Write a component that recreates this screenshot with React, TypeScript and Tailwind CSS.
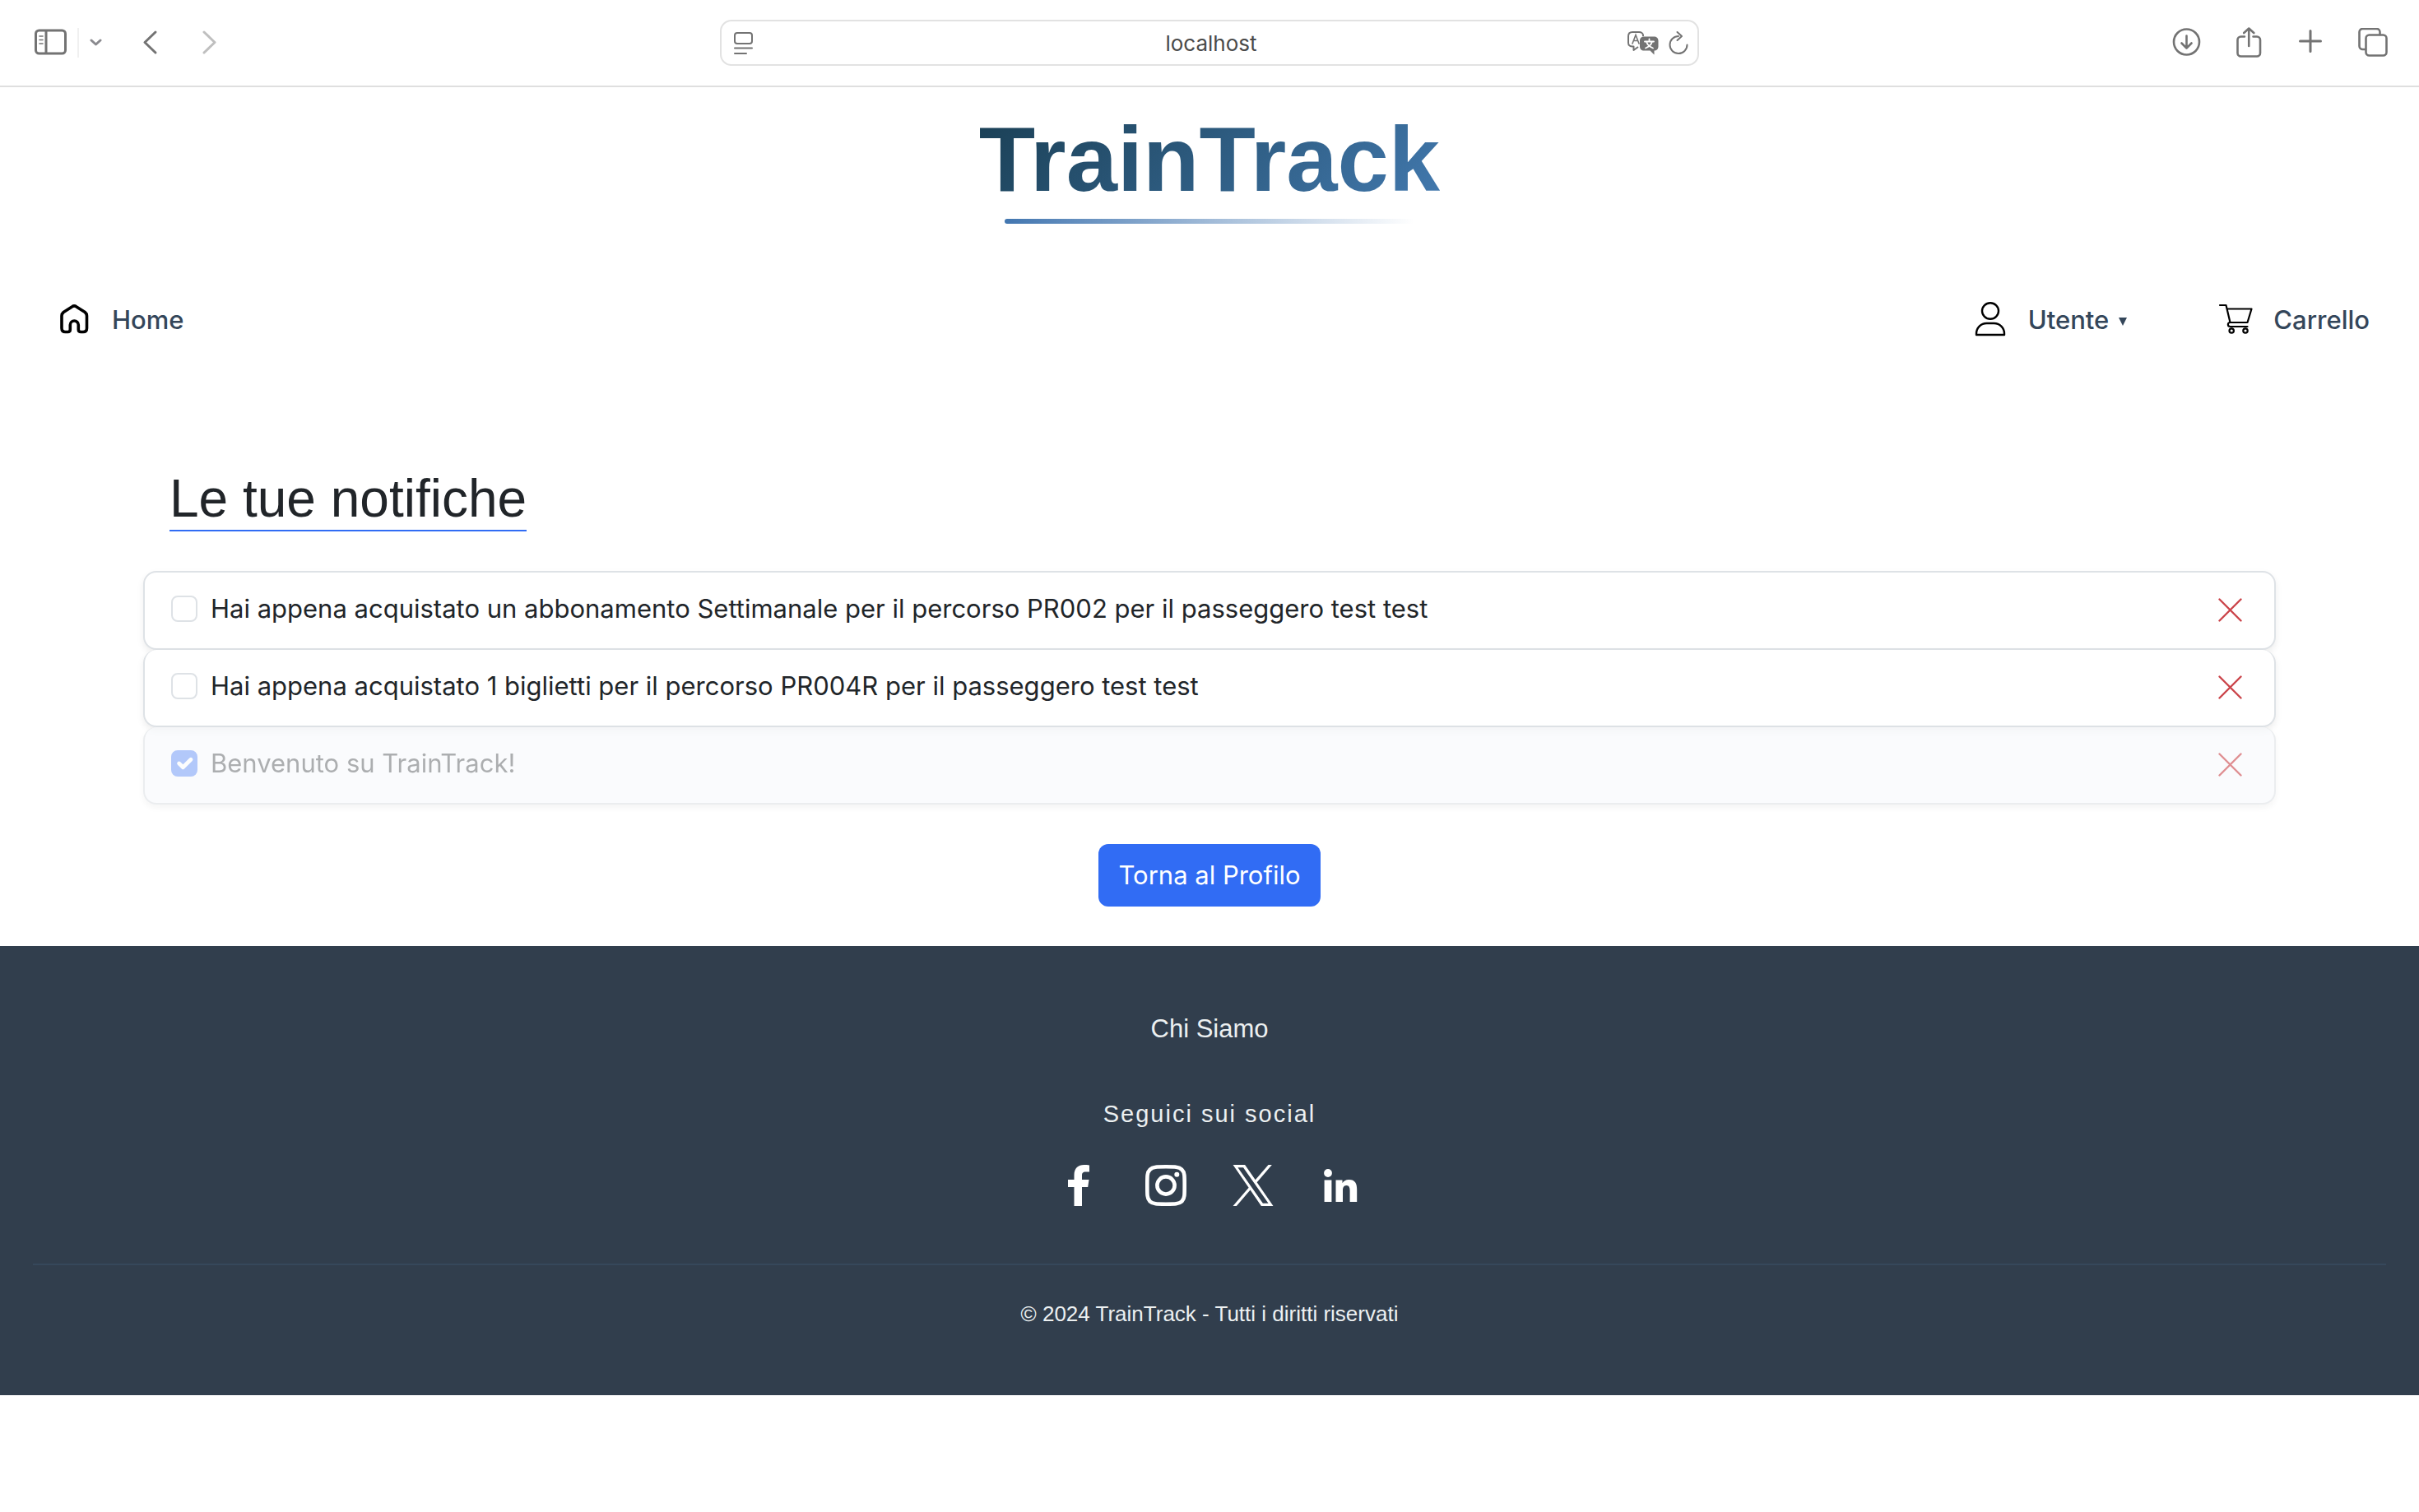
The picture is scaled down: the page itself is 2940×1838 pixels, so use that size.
import { useState } from "react";
import type { ReactNode } from "react";

function Icon({ size, className, children, width = 3 }: { size: number; className: string; children: ReactNode; width?: number }) {
  return (
    <svg
      viewBox={`0 0 ${size} ${size}`}
      className={className}
      fill="none"
      stroke="currentColor"
      strokeWidth={width}
      strokeLinecap="round"
      strokeLinejoin="round"
      aria-hidden="true"
    >
      {children}
    </svg>
  );
}

function BrowserBar() {
  const [address, setAddress] = useState("localhost");
  return (
    <div className="grid h-[106px] grid-cols-[1fr_1190px_1fr] items-center border-b-2 border-[#dfdfdf] bg-white text-[#737373]">
      <div className="flex items-center pl-[41px]">
        <button type="button" aria-label="Barra laterale">
          <Icon size={40} className="size-10">
            <rect x="2.5" y="5" width="36" height="28" rx="4" />
            <path d="M15 5.500v27" />
            <path d="M7 12h4M7 16.500h4M7 21h4" strokeWidth="1.6" />
          </Icon>
        </button>
        <span className="ml-[13px] h-9 w-0.5 bg-[#f0f0f0]" />
        <button type="button" aria-label="Gruppi di pannelli" className="ml-3 text-[#8a8a8f]">
          <Icon size={16} className="size-4">
            <path d="M3 5l5.500 5 5.500-5" />
          </Icon>
        </button>
        <button type="button" aria-label="Indietro" className="ml-[43px]">
          <Icon size={32} className="size-8">
            <path d="M22 3 9 15.500l13 12.500" />
          </Icon>
        </button>
        <button type="button" aria-label="Avanti" className="ml-[40px] text-[#bfbfbf]">
          <Icon size={32} className="size-8">
            <path d="m9 3 13 12.500L9 28" />
          </Icon>
        </button>
      </div>

      <div className="flex h-14 items-center gap-3 rounded-[14px] border-2 border-[#e2e2e2] pr-2 pl-3">
        <Icon size={28} className="size-7" width={2}>
          <rect x="4" y="2" width="21" height="13" rx="3" />
          <path d="M4 20.500h21M4 27h14" />
        </Icon>
        <input
          type="text"
          aria-label="Indirizzo"
          value={address}
          onChange={(e) => setAddress(e.target.value)}
          className="ml-[50px] min-w-0 flex-1 pt-0.5 text-center text-[26px] leading-8 text-[#4a4a4a] outline-none"
        />
        <button type="button" aria-label="Traduci">
          <svg viewBox="0 0 40 30" className="h-[30px] w-10" fill="none" aria-hidden="true">
            <path
              d="M14 20l-5.500 4v-4.500C4 20 2 18 2 15V7c0-3 2-5 5-5h8c3 0 5 2 5 4v1"
              stroke="currentColor"
              strokeWidth="2"
              strokeLinejoin="round"
            />
            <path d="m7 16 4-10.500 4 10.500M8.500 12.500h5" stroke="currentColor" strokeWidth="1.6" strokeLinecap="round" />
            <path d="M21 7.500h12c3.500 0 5.500 2 5.500 5v7c0 3-2 5-5 5v5l-5-5H21c-3 0-5-2-5-5v-7c0-3 2-5 5-5z" fill="currentColor" />
            <path d="M27.500 10.500v3M22 13.500h11M24 13.500c1 3.500 4 6.500 8 8M31 13.500c-1 3.500-4 6.500-8 8" stroke="#fff" strokeWidth="1.8" strokeLinecap="round" />
          </svg>
        </button>
        <button type="button" aria-label="Ricarica">
          <Icon size={30} className="-ml-1 size-[30px]" width={2}>
            <path d="M15 7a10.500 10.500 0 1 0 10.500 10.500" />
            <path d="m13.500 2 5.500 5-5.500 5" />
          </Icon>
        </button>
      </div>

      <div className="flex items-center justify-end gap-[39px] pr-[38px]">
        <button type="button" aria-label="Download">
          <Icon size={36} className="size-9" width={2.6}>
            <circle cx="18.500" cy="17" r="15.500" />
            <path d="M18.500 9.500v15M12.500 18.500l6 6 6-6" />
          </Icon>
        </button>
        <button type="button" aria-label="Condividi">
          <Icon size={38} className="size-[38px]" width={2.6}>
            <path d="M14 11.500H9.500a4 4 0 0 0-4 4v16a4 4 0 0 0 4 4H29a4 4 0 0 0 4-4v-16a4 4 0 0 0-4-4h-4.500" />
            <path d="M19.250 23V1.500M13.250 7l6-5.500 6 5.500" />
          </Icon>
        </button>
        <button type="button" aria-label="Nuovo pannello">
          <Icon size={36} className="size-9">
            <path d="M17 3.500v25M4.500 16h25" />
          </Icon>
        </button>
        <button type="button" aria-label="Mostra pannelli">
          <Icon size={36} className="size-9" width={2.6}>
            <rect x="9.500" y="8.500" width="25" height="25" rx="4" />
            <path d="M26.500 8V5a4 4 0 0 0-4-4h-17a4 4 0 0 0-4 4v17a4 4 0 0 0 4 4H9" />
          </Icon>
        </button>
      </div>
    </div>
  );
}

function SiteHeader() {
  return (
    <header>
      <div className="flex flex-col items-center pt-6">
        <div className="flex flex-col items-center">
          <a
            href="#"
            className="bg-linear-135 from-[#1a3f54] to-[#437ab0] bg-clip-text font-['Liberation_Sans',sans-serif] text-[112px] leading-[128px] font-bold text-transparent"
          >
            TrainTrack
          </a>
          <span className="mt-2 h-1.5 w-[89%] rounded-full bg-linear-to-r from-[#4276b0] to-transparent" />
        </div>
      </div>
      <nav className="mt-[93px] flex items-center justify-between pr-[60px] pl-[66px] text-[31px] leading-[48px] font-medium text-[#34465a]">
        <a href="#" className="flex items-center gap-[22px]">
          <Icon size={48} className="size-12 text-black" width={3.6}>
            <path d="M9 19v15c0 3 1.500 4.500 4.500 4.500h2.800c2 0 3-1 3-3V30a5 5 0 0 1 10 0v5.500c0 2 1 3 3 3h2.700c3 0 4.500-1.500 4.500-4.500V19c0-2-.7-3.300-2.200-4.500L27 7.900c-2-1.400-3.600-1.400-5.600 0L11.200 14.500C9.700 15.700 9 17 9 19z" />
          </Icon>
          Home
        </a>
        <div className="flex items-center gap-[108px]">
          <button type="button" className="flex items-center gap-[22px]">
            <Icon size={48} className="size-12 text-black" width={2.4}>
              <ellipse cx="24" cy="13" rx="10" ry="9.800" />
              <path d="M7 42v-1.500A12.500 12.500 0 0 1 19.500 28h9A12.500 12.500 0 0 1 41 40.500V42z" />
            </Icon>
            <span className="flex items-center gap-3">
              Utente
              <svg viewBox="0 0 10 10" className="mt-1 size-[10px]" fill="currentColor" aria-hidden="true">
                <path d="M0 0h10L5 10z" />
              </svg>
            </span>
          </button>
          <a href="#" className="flex items-center gap-[22px]">
            <Icon size={48} className="size-12 text-black" width={2.2}>
              <path d="M5 6h7.500l5 21h21l5-16.500H14" />
              <path d="M17.500 27c-3.500 0-3.500 5 0 5h21" />
              <circle cx="19.200" cy="37" r="2.700" />
              <circle cx="36" cy="37" r="2.700" />
            </Icon>
            Carrello
          </a>
        </div>
      </nav>
    </header>
  );
}

const initial = [
  { id: 1, text: "Hai appena acquistato un abbonamento Settimanale per il percorso PR002 per il passeggero test test", read: false },
  { id: 2, text: "Hai appena acquistato 1 biglietti per il percorso PR004R per il passeggero test test", read: false },
  { id: 3, text: "Benvenuto su TrainTrack!", read: true },
];

function Notifications() {
  const [items, setItems] = useState(initial);
  const markRead = (id: number) => setItems(items.map((n) => (n.id === id ? { ...n, read: true } : n)));
  const remove = (id: number) => setItems(items.filter((n) => n.id !== id));

  return (
    <main className="mx-auto mt-[155px] max-w-[2640px] px-6 pb-12">
      <h2 className="ml-8 w-fit border-b-2 border-[#316cf4] font-['Liberation_Sans',sans-serif] text-[64px] leading-[76px] text-[#212529]">
        Le tue notifiche
      </h2>
      <ul className="mt-12">
        {items.map((n) => (
          <li
            key={n.id}
            className={`flex items-center justify-between rounded-2xl border-2 border-t-0 border-[#dee2e6] px-8 pt-5 pb-6 shadow-[0_4px_8px_rgba(0,0,0,0.075)] first:border-t-2 ${
              n.read ? "bg-[#f7f9fc] opacity-60" : "bg-white"
            }`}
          >
            <div className={`flex items-center gap-4 ${n.read ? "opacity-60" : ""}`}>
              <span className="relative size-8">
                <input
                  id={`notifica-${n.id}`}
                  type="checkbox"
                  checked={n.read}
                  disabled={n.read}
                  onChange={() => markRead(n.id)}
                  className="block size-8 appearance-none rounded-lg border-2 border-[#dee2e6] bg-white checked:border-[#316cf4] checked:bg-[#316cf4]"
                />
                {n.read && (
                  <svg
                    viewBox="0 0 20 20"
                    className="pointer-events-none absolute inset-0 size-8"
                    fill="none"
                    stroke="#fff"
                    strokeWidth="3"
                    strokeLinecap="round"
                    strokeLinejoin="round"
                    aria-hidden="true"
                  >
                    <path d="m6 10 3 3 6-6" />
                  </svg>
                )}
              </span>
              <label htmlFor={`notifica-${n.id}`} className="text-[31px] leading-[48px] text-[#212529]">
                {n.text}
              </label>
            </div>
            <button type="button" aria-label="Elimina notifica" onClick={() => remove(n.id)} className="mr-1.5 text-[#cb444a]">
              <Icon size={32} className="size-8" width={2.4}>
                <path d="m3.500 4.500 26 26M29.500 4.500l-26 26" />
              </Icon>
            </button>
          </li>
        ))}
      </ul>
      <div className="mt-12 flex justify-center">
        <button type="button" className="rounded-xl bg-[#316cf4] px-6 py-[14px] text-[31px] leading-[48px] text-white">
          Torna al Profilo
        </button>
      </div>
    </main>
  );
}

function SiteFooter() {
  return (
    <footer className="flex flex-col items-center bg-[#313e4d] px-10 pt-[77px] pb-[79px] font-['Liberation_Sans',sans-serif] text-[#ecf0f1]">
      <a href="#" className="text-[31px] leading-[48px]">Chi Siamo</a>
      <p className="mt-[57px] text-[29px] leading-[44px] tracking-[2px]">Seguici sui social</p>
      <div className="mt-10 flex gap-14 text-white">
        <a href="#" aria-label="Facebook">
          <svg viewBox="0 0 50 50" className="size-[50px]" fill="currentColor" aria-hidden="true">
            <path d="M19.500 50V27H12v-9h7.500v-5.500C19.500 4 24.500 0 31.500 0c2.500 0 4.500.2 6.500.4v8.100h-4.500c-3.500 0-4.500 1.700-4.500 4.500v5h8.500L36.200 27H29v23z" />
          </svg>
        </a>
        <a href="#" aria-label="Instagram">
          <svg viewBox="0 0 50 50" className="size-[50px]" fill="none" stroke="currentColor" strokeWidth="4.6" aria-hidden="true">
            <path d="M25 2.300c7 0 10 0 12.500.4 6 .8 9.300 4.200 9.900 9.800.3 2.500.3 5.500.3 12.500s0 10-.3 12.500c-.6 5.600-3.900 9-9.900 9.800-2.500.4-5.500.4-12.500.4s-10 0-12.500-.4c-6-.8-9.300-4.200-9.900-9.800C2.300 35 2.300 32 2.300 25s0-10 .3-12.500c.6-5.600 3.900-9 9.900-9.800C15 2.300 18 2.300 25 2.300z" />
            <circle cx="25" cy="25" r="10.600" />
            <circle cx="38.300" cy="11.700" r="3" fill="currentColor" stroke="none" />
          </svg>
        </a>
        <a href="#" aria-label="X">
          <svg viewBox="0 0 1200 1227" className="size-[50px]" fill="currentColor" aria-hidden="true">
            <path d="M714.163 519.284L1160.89 0H1055.03L667.137 450.887L357.328 0H0L468.492 681.821L0 1226.37H105.866L515.491 750.218L842.672 1226.37H1200L714.137 519.284H714.163ZM569.165 687.828L521.697 619.934L144.011 79.6944H306.615L611.412 515.685L658.88 583.579L1055.08 1150.3H892.476L569.165 687.854V687.828Z" />
          </svg>
        </a>
        <a href="#" aria-label="LinkedIn">
          <svg viewBox="0 0 50 50" className="size-[50px]" fill="currentColor" aria-hidden="true">
            <circle cx="10" cy="10" r="4.900" />
            <path d="M5.600 18.500h8.800V45H5.600zM19.500 18.500h8v3.800c1.500-2.500 4-4.300 8-4.300 7.500 0 9.700 4.800 9.700 12v15h-8.600V31.500c0-3.500-.6-6.500-4.100-6.500-3.800 0-4.500 3.200-4.500 6.500V45h-8.500z" />
          </svg>
        </a>
      </div>
      <div className="mt-[70px] w-full border-t-2 border-[#36485b] pt-[39px] text-center text-[26px] leading-10">
        © 2024 TrainTrack - Tutti i diritti riservati
      </div>
    </footer>
  );
}

export default function App() {
  return (
    <div className="min-h-screen bg-white font-['Inter',sans-serif]">
      <BrowserBar />
      <SiteHeader />
      <Notifications />
      <SiteFooter />
    </div>
  );
}
